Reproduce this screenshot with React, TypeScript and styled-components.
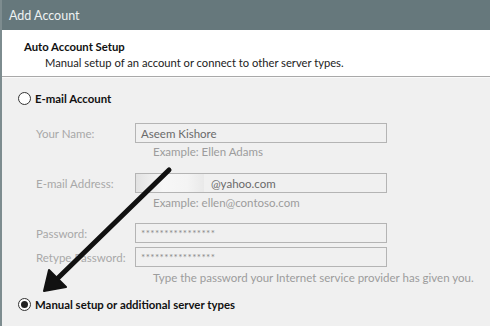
import React from "react";
import styled, { createGlobalStyle } from "styled-components";

const Global = createGlobalStyle`
  html, body { margin: 0; padding: 0; }
  body { font-family: Lato, "Noto Sans", sans-serif; }
`;

const Frame = styled.div`
  position: relative;
  width: 490px;
  height: 326px;
  overflow: hidden;
  background: #f0f0f0;
  border-left: 2px solid #7d8c8f;
  box-sizing: border-box;
  font-size: 11.5px;
  white-space: nowrap;
`;

const TitleBar = styled.div`
  height: 30px;
  background: #66787c;
  color: #eef2f2;
  font-size: 12.5px;
  display: flex;
  align-items: center;
  padding-left: 7px;
`;

const Header = styled.div`
  height: 47px;
  background: #fff;
  border-bottom: 1px solid #a9a9a9;
  box-shadow: 0 1px 0 #fafafa;
  display: flex;
  flex-direction: column;
  padding: 9px 0 0 22px;
  box-sizing: border-box;
`;

const HeaderTitle = styled.div`
  font-weight: bold;
  font-size: 11.3px;
  color: #111;
  line-height: 16px;
`;

const HeaderSub = styled.div`
  color: #222;
  font-size: 11.2px;
  padding-left: 21px;
  line-height: 16px;
`;

const Body = styled.div`
  padding: 13px 0 0 16px;
`;

const RadioRow = styled.div<{ $mt?: number }>`
  display: flex;
  align-items: center;
  gap: 4px;
  height: 16px;
  margin-top: ${(p) => p.$mt ?? 0}px;
  font-weight: bold;
  font-size: 11.4px;
  color: #111;
`;

const Radio = styled.span<{ $on?: boolean }>`
  width: 11px;
  height: 11px;
  border: 1px solid #333;
  border-radius: 50%;
  background: #fff;
  display: flex;
  align-items: center;
  justify-content: center;
  &::after {
    content: "";
    display: ${(p) => (p.$on ? "block" : "none")};
    width: 7px;
    height: 7px;
    border-radius: 50%;
    background: #222;
  }
`;

const Form = styled.div`
  padding-left: 18px;
  margin-top: 17px;
  display: flex;
  flex-direction: column;
`;

const Row = styled.div<{ $mt?: number }>`
  display: flex;
  align-items: center;
  height: 20px;
  margin-top: ${(p) => p.$mt ?? 0}px;
`;

const Label = styled.div`
  width: 99px;
  color: #a8a8a8;
`;

const Field = styled.div`
  position: relative;
  width: 252px;
  height: 20px;
  box-sizing: border-box;
  border: 1px solid #b4b4b4;
  background: #f0f0f0;
  color: #6a6a6a;
  display: flex;
  align-items: center;
  padding-left: 5px;
  overflow: hidden;
`;

const Masked = styled.span`
  font-size: 10px;
  letter-spacing: 0.4px;
  color: #8a8a8a;
`;

const Blur = styled.span`
  width: 68px;
  height: 18px;
  margin-left: -5px;
  margin-right: 7px;
  background: linear-gradient(90deg, #e2e2e2 0%, #f7f7f7 40%, #f4f4f4 75%, #e9e9e9 100%);
`;

const Hint = styled.div<{ $mt?: number }>`
  padding-left: 117px;
  color: #9c9c9c;
  height: 16px;
  line-height: 16px;
  margin-top: ${(p) => p.$mt ?? 0}px;
`;

const Arrow = styled.svg`
  position: absolute;
  left: 0;
  top: 0;
  pointer-events: none;
`;

export default function App() {
  return (
    <>
      <Global />
      <Frame>
        <TitleBar>Add Account</TitleBar>
        <Header>
          <HeaderTitle>Auto Account Setup</HeaderTitle>
          <HeaderSub>Manual setup of an account or connect to other server types.</HeaderSub>
        </Header>
        <Body>
          <RadioRow>
            <Radio />
            E-mail Account
          </RadioRow>
          <Form>
            <Row>
              <Label>Your Name:</Label>
              <Field>Aseem Kishore</Field>
            </Row>
            <Hint $mt={1}>Example: Ellen Adams</Hint>
            <Row $mt={13}>
              <Label>E-mail Address:</Label>
              <Field>
                <Blur />
                @yahoo.com
              </Field>
            </Row>
            <Hint $mt={2}>Example: ellen@contoso.com</Hint>
            <Row $mt={12}>
              <Label>Password:</Label>
              <Field>
                <Masked>****************</Masked>
              </Field>
            </Row>
            <Row $mt={4}>
              <Label>Retype Password:</Label>
              <Field>
                <Masked>****************</Masked>
              </Field>
            </Row>
            <Hint $mt={3}>Type the password your Internet service provider has given you.</Hint>
          </Form>
          <RadioRow $mt={10}>
            <Radio $on />
            Manual setup or additional server types
          </RadioRow>
        </Body>
        <Arrow width="490" height="326" viewBox="0 0 490 326">
          <line x1="167" y1="170" x2="56" y2="278" stroke="#111" strokeWidth="5" strokeLinecap="round" />
          <polygon points="42,291 47,270 64,287" fill="#111" stroke="#111" strokeWidth="2" strokeLinejoin="round" />
        </Arrow>
      </Frame>
    </>
  );
}
